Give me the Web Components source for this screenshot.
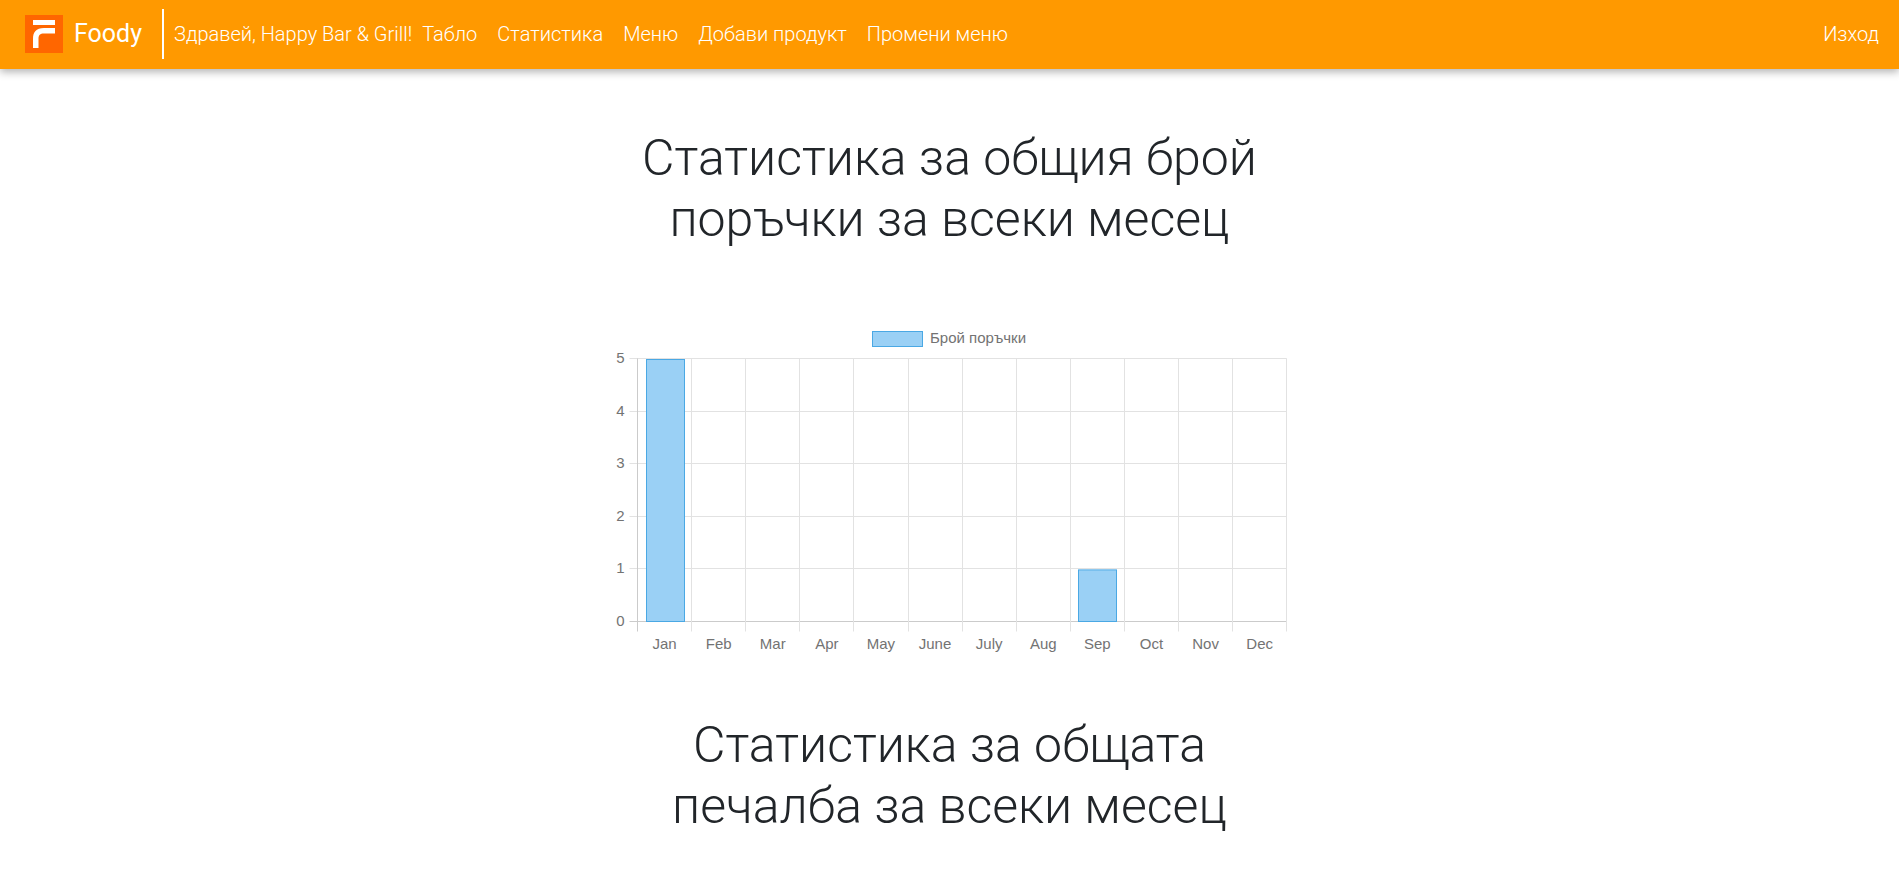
<!DOCTYPE html>
<html lang="bg">
<head>
<meta charset="utf-8">
<title>Foody</title>
<style>
  html, body { margin: 0; background: #fff; }
  body { font-family: Roboto, "Liberation Sans", sans-serif; color: #212529; }
</style>
</head>
<body>
<foody-nav>
  <nav-link>Табло</nav-link>
  <nav-link>Статистика</nav-link>
  <nav-link>Меню</nav-link>
  <nav-link>Добави продукт</nav-link>
  <nav-link>Промени меню</nav-link>
  <nav-link slot="end">Изход</nav-link>
</foody-nav>
<stats-page>
  <stats-heading>Статистика за общия брой<br>поръчки за всеки месец</stats-heading>
  <bar-chart label="Брой поръчки" values="5,0,0,0,0,0,0,0,1,0,0,0"></bar-chart>
  <stats-heading>Статистика за общата<br>печалба за всеки месец</stats-heading>
</stats-page>

<script>
class FoodyNav extends HTMLElement {
  constructor() {
    super();
    this.root = this.attachShadow({ mode: 'open' });
    this.root.innerHTML = `
      <style>
        :host {
          display: flex;
          align-items: center;
          box-sizing: border-box;
          height: 69px;
          padding: 0 20px 2px 25px;
          background: #ff9900;
          color: #fff;
          box-shadow: 0 3px 8px rgba(0, 0, 0, .3);
          position: relative;
        }
        .logo { display: block; width: 38px; height: 38px; margin-right: 11px; }
        .brand { font-size: 25px; font-weight: 400; margin-right: 20px; }
        .divider { width: 2px; height: 50px; background: #fff; margin-right: 10px; }
        .hello { font-size: 20px; font-weight: 300; margin-right: 10px; white-space: nowrap; }
        .links { display: flex; gap: 20px; flex: 1; }
      </style>
      <svg class="logo" viewBox="0 0 38 38">
        <rect width="38" height="38" fill="#ff6600"/>
        <path d="M8 5 H30 V10 H8 Z M30 13 H19 C11 13 8 17 8 24 V33 H13.5 V24 C13.5 20 15 18.5 19 18.5 H30 Z" fill="#fff"/>
      </svg>
      <span class="brand">Foody</span>
      <span class="divider"></span>
      <span class="hello">Здравей, Happy Bar &amp; Grill!</span>
      <div class="links"><slot></slot></div>
      <slot name="end"></slot>
    `;
  }
}

class NavLink extends HTMLElement {
  constructor() {
    super();
    this.root = this.attachShadow({ mode: 'open' });
    this.root.innerHTML = `
      <style>
        :host { display: block; font-size: 20px; font-weight: 300; white-space: nowrap; }
      </style>
      <slot></slot>
    `;
  }
}

class StatsPage extends HTMLElement {
  constructor() {
    super();
    this.root = this.attachShadow({ mode: 'open' });
    this.root.innerHTML = `
      <style>
        :host {
          display: flex;
          flex-direction: column;
          align-items: center;
          padding-top: 59px;
        }
      </style>
      <slot></slot>
    `;
  }
}

class StatsHeading extends HTMLElement {
  constructor() {
    super();
    this.root = this.attachShadow({ mode: 'open' });
    this.root.innerHTML = `
      <style>
        :host {
          display: block;
          font-size: 50px;
          font-weight: 300;
          line-height: 61px;
          text-align: center;
        }
      </style>
      <slot></slot>
    `;
  }
}

// same look as the chart.js bar chart: plot box, grid, ticks, legend on top
class BarChart extends HTMLElement {
  constructor() {
    super();
    this.root = this.attachShadow({ mode: 'open' });
  }

  connectedCallback() {
    const label = this.getAttribute('label');
    const values = this.getAttribute('values').split(',').map(Number);
    const months = ['Jan', 'Feb', 'Mar', 'Apr', 'May', 'June', 'July', 'Aug', 'Sep', 'Oct', 'Nov', 'Dec'];
    const left = 27.5, top = 29.5, colW = 54.1, rowH = 52.6, plotH = 263;
    const right = left + colW * 12;
    const grid = '#e2e2e2', axis = '#cbcbcb', ink = '#737373';
    let out = '';

    for (let i = 0; i <= 5; i++) {
      const y = Math.floor(top + rowH * i) + .5;
      const color = i == 5 ? axis : grid;
      out += `<line x1="${left - 8}" x2="${right}" y1="${y}" y2="${y}" stroke="${color}"/>`;
      out += `<text x="${left - 13}" y="${y + 4.5}" text-anchor="end">${5 - i}</text>`;
    }
    for (let i = 0; i <= 12; i++) {
      const x = Math.floor(left + colW * i) + .5;
      const color = i == 0 ? axis : grid;
      out += `<line x1="${x}" x2="${x}" y1="${top}" y2="${top + plotH + 10}" stroke="${color}"/>`;
    }
    values.forEach((v, i) => {
      const x = left + colW * i + 8;
      if (v > 0) {
        const h = rowH * v;
        out += `<rect x="${Math.round(x) + .5}" y="${top + plotH - h + 1}" width="38" height="${h - 1}" fill="#9ad0f5" stroke="#4aa8e4"/>`;
      }
      out += `<text x="${left + colW * i + colW / 2}" y="${top + plotH + 27}" text-anchor="middle">${months[i]}</text>`;
    });

    this.root.innerHTML = `
      <style>
        :host { display: block; width: 680px; height: 330px; margin: 79px 0 56px; }
        svg { display: block; }
        text { font: 15px "Liberation Sans", Arial, sans-serif; fill: ${ink}; }
      </style>
      <svg width="680" height="330" viewBox="0 0 680 330">
        <rect x="262.5" y="2.5" width="50" height="15" fill="#9ad0f5" stroke="#4aa8e4"/>
        <text x="320" y="14">${label}</text>
        ${out}
      </svg>
    `;
  }
}

customElements.define('foody-nav', FoodyNav);
customElements.define('nav-link', NavLink);
customElements.define('stats-page', StatsPage);
customElements.define('stats-heading', StatsHeading);
customElements.define('bar-chart', BarChart);
</script>
</body>
</html>
